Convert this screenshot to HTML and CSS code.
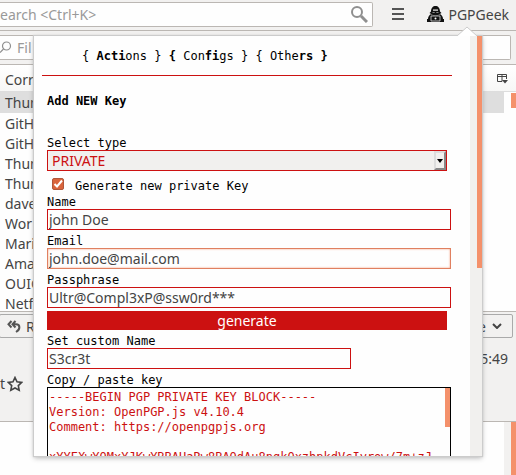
FILE: index.html
```
<!DOCTYPE html>
<html lang="en">

<head>
    <meta charset="UTF-8">
    <meta name="viewport" content="width=device-width, initial-scale=1.0">
    <title>PGPGeek</title>
    <link rel="stylesheet" href="styles.css">
</head>

<body>

    <!-- mail window -->
    <header class="toolbar">
        <div class="search">
            <input type="text" aria-label="Search" placeholder="earch &lt;Ctrl+K&gt;">
            <svg width="18" height="18" viewBox="0 0 18 18" fill="none" stroke="#8f8f8f">
                <circle cx="7" cy="7" r="5" stroke-width="2" />
                <path d="M11 11l6 6" stroke-width="3" />
            </svg>
        </div>
        <button class="menuBtn" aria-label="Menu"><span></span><span></span><span></span></button>
        <button class="geekBtn">
            <svg width="17" height="16" viewBox="0 0 17 16">
                <path d="M4 5.500C4 2 6 0 8.500 0S13 2 13 5.500L14.500 7 12 8.500c-1 1.500-6 1.500-7 0L2.500 7z" fill="#111" />
                <path d="M6 3.500h5v1.200H6z" fill="#f2f1f0" />
                <path d="M5.500 6h2.200v1H5.500zM9.300 6h2.200v1H9.300z" fill="#888" />
                <path d="M4 8c2 2 7 2 9 0 2 1 3 3 3 5h1v3H0v-3h1c0-2 1-4 3-5z" fill="#111" />
                <path d="M4 10h9v5H4z" fill="#111" stroke="#ddd" stroke-width=".8" />
                <circle cx="8.500" cy="12.500" r="1" fill="#fff" />
            </svg>
            PGPGeek
        </button>
    </header>

    <div class="filterBar">
        <svg width="13" height="13" viewBox="0 0 13 13" fill="none" stroke="#8f8f8f" stroke-width="1.200">
            <circle cx="6.500" cy="5" r="4" />
            <path d="M3.500 8L0 11.500" />
        </svg>
        <input type="text" aria-label="Filter" placeholder="Fil">
    </div>

    <div class="listHead">
        <span>Corr</span>
        <svg width="11" height="10" viewBox="0 0 11 10" fill="none" stroke="#444">
            <path d="M5 7.500H.5v-7h9V5M0 2.500h10M5 0v7.500" />
            <path d="M5 6h6L8 9.500z" fill="#444" stroke="none" />
        </svg>
    </div>

    <main class="mailList">
        <ul>
            <li class="selected">Thun</li>
            <li>GitH</li>
            <li>GitH</li>
            <li>Thun</li>
            <li>Thun</li>
            <li>dave</li>
            <li>Wor</li>
            <li>Mari</li>
            <li>Ama</li>
            <li>OUIG</li>
            <li>Netf</li>
        </ul>
        <div class="scroll"><i class="listThumb"></i></div>
    </main>

    <section class="message">
        <div class="actions">
            <button class="reply" aria-label="Reply">
                <svg width="14" height="13" viewBox="0 0 14 13" fill="none" stroke="#555" stroke-width="2">
                    <path d="M4.500 1L1.500 4.300l3 3.200M8.500 1l-3 3.300 3 3.200M6 4.300h3c4.500 0 4.500 5 0 7.700" />
                </svg>
                R
            </button>
            <button class="more">
                More
                <svg width="10" height="6" viewBox="0 0 10 6" fill="none" stroke="#444" stroke-width="2">
                    <path d="M1 1l4 4 4-4" />
                </svg>
            </button>
        </div>
        <time>15:49</time>
        <div class="subject">t<svg width="16" height="16" viewBox="0 0 16 16" fill="none" stroke="#444" stroke-width="1.600">
                <path d="M8 1.500l2 4.300 4.700.6-3.400 3.200.9 4.700L8 12l-4.200 2.300.9-4.700L1.300 6.400 6 5.800z" />
            </svg></div>
    </section>

    <div class="mailBody">
        <div class="scroll"><i class="bodyThumb"></i></div>
    </div>

    <!-- add-on popup -->
    <div class="popup">
        <svg class="arrow" width="20" height="10" viewBox="0 0 20 10">
            <path d="M0 10L10 1l10 9" fill="#fff" stroke="#ccc" />
        </svg>
        <div class="panel">
            <form class="content">
                <nav>{ <b>Acti</b>ons } <b>{</b> Con<b>fi</b>gs } { Othe<b>rs }</b></nav>
                <h1>Add NEW Key</h1>

                <label for="type">Select type</label>
                <div class="selectBox">
                    <select id="type">
                        <option>PRIVATE</option>
                    </select>
                    <span class="drop"></span>
                </div>

                <div class="check">
                    <input type="checkbox" id="newKey" checked>
                    <label for="newKey">Generate new private Key</label>
                </div>

                <label for="name">Name</label>
                <input type="text" id="name" value="john Doe">

                <label for="email">Email</label>
                <input type="text" id="email" class="active" value="john.doe@mail.com">

                <label for="pass">Passphrase</label>
                <input type="text" id="pass" value="Ultr@Compl3xP@ssw0rd***">

                <button type="button" class="generate">generate</button>

                <label for="custom">Set custom Name</label>
                <input type="text" id="custom" class="short" value="S3cr3t">

                <label for="key">Copy / paste key</label>
                <div class="keyBox">
                    <textarea id="key" rows="12">-----BEGIN PGP PRIVATE KEY BLOCK-----
Version: OpenPGP.js v4.10.4
Comment: https://openpgpjs.org

xYYEXwYOMxYJKwYBBAHaRw8BAQdAu8ngkQxzhpkdVcIyrow/7m+zJ</textarea>
                    <i class="keyThumb"></i>
                </div>
            </form>
            <div class="popupScroll"><i></i></div>
        </div>
    </div>

</body>

</html>
```
FILE: styles.css
```
* {
    box-sizing: border-box;
}

body {
    margin: 0;
    height: 100vh;
    overflow: hidden;
    display: flex;
    flex-direction: column;
    background-color: #fefefe;
    color: #444;
    font-family: "Noto Sans", "Open Sans", sans-serif;
    font-size: 14px;
}

svg {
    flex: none;
}

input,
button,
select,
textarea {
    font: inherit;
    color: inherit;
    margin: 0;
    outline: none;
}

input::placeholder {
    color: #999;
    opacity: 1;
}

/* top bar */
.toolbar {
    height: 31px;
    flex: none;
    display: flex;
    align-items: center;
    padding: 0 7px 2px 0;
    background-color: #f2f1f0;
    border-bottom: 1px solid #bbb7b3;
}

.search {
    flex: 1;
    height: 25px;
    display: flex;
    align-items: center;
    padding-right: 4px;
    background-color: #fefefe;
    border: 1px solid #bbb7b3;
    border-left: none;
    border-radius: 0 2px 2px 0;
}

.search input {
    flex: 1;
    min-width: 0;
    padding: 0;
    border: none;
    background: none;
}

.menuBtn {
    width: 12px;
    margin: 0 23px 0 19px;
    padding: 0;
    display: grid;
    gap: 3px;
    border: none;
    background: none;
}

.menuBtn span {
    height: 2px;
    background-color: #555;
}

.geekBtn {
    display: flex;
    align-items: center;
    gap: 4px;
    padding: 0;
    border: none;
    background: none;
}

/* filter line */
.filterBar {
    height: 34px;
    flex: none;
    position: relative;
    padding: 4px 5px 4px 0;
    background-color: #f2f1f0;
    border-bottom: 1px solid #bbb7b3;
}

.filterBar svg {
    position: absolute;
    left: 0;
    top: 10px;
}

.filterBar input {
    width: 100%;
    height: 25px;
    padding: 0 17px;
    background-color: #fefefe;
    border: 1px solid #bbb7b3;
    border-left: none;
    border-radius: 0 2px 2px 0;
}

.listHead {
    height: 27px;
    flex: none;
    display: flex;
    align-items: center;
    justify-content: space-between;
    padding: 2px 8px 0 5px;
    background: linear-gradient(#fff, #f7f7f6);
    border-bottom: 1px solid #ddd;
}

/* mails */
.mailList {
    height: 219px;
    flex: none;
    display: flex;
    overflow: hidden;
}

.mailList ul {
    flex: 1;
    margin: 0;
    padding: 0;
    list-style: none;
}

.mailList li {
    height: 20px;
    padding-left: 5px;
    line-height: 22px;
}

.mailList .selected {
    height: 21px;
    background-color: #dedede;
}

.scroll {
    width: 12px;
    margin-left: auto;
    display: flex;
    justify-content: flex-end;
}

.scroll i {
    width: 5px;
    background-color: #f4916b;
}

.listThumb {
    height: 15px;
    margin-top: 1px;
}

.message {
    height: 111px;
    flex: none;
    padding: 2px 3px;
    background-color: #f2f1f0;
    border-top: 1px solid #bbb7b3;
    border-bottom: 1px solid #bbb7b3;
}

.actions {
    display: flex;
    justify-content: space-between;
    margin-left: -4px;
}

.actions button {
    height: 24px;
    display: flex;
    align-items: center;
    gap: 6px;
    padding: 0 10px;
    background-color: #f2f1f0;
    border: 1px solid #aaa;
    border-radius: 2px;
}

.actions .reply {
    gap: 5px;
    padding: 0 7px;
}

.message time {
    display: block;
    margin: 11px 5px 0 0;
    text-align: right;
}

.subject {
    display: flex;
    align-items: center;
    margin-left: -3px;
    gap: 2px;
    margin-top: 6px;
}

.mailBody {
    flex: 1;
    display: flex;
}

.mailBody .scroll {
    background-color: #f2f1f0;
}

/* popup */
.popup {
    position: absolute;
    left: 34px;
    right: 34px;
    top: 36px;
    bottom: 19px;
    background-color: #fefefe;
    box-shadow: 0 0 1px 1px #ccc, 0 2px 5px rgba(0, 0, 0, 0.3);
}

.arrow {
    position: absolute;
    right: 5px;
    top: -10px;
}

.panel {
    height: 100%;
    display: flex;
    overflow: hidden;
}

.content {
    flex: 1;
    min-width: 0;
    padding: 0 19px 0 13px;
    color: #000;
    font-family: "DejaVu Sans Mono", monospace;
    font-size: 12px;
}

.content nav {
    margin: 0 -1px 0 -5px;
    padding: 11px 0 0 40px;
    height: 40px;
    line-height: 18px;
    white-space: pre;
    border-bottom: 1px solid #cc1111;
}

.content h1 {
    margin: 16px 0 22px;
    font-size: 12px;
    line-height: 18px;
}

.content label {
    display: block;
    padding-top: 4px;
    line-height: 14px;
}

.content input[type="text"] {
    display: block;
    width: 100%;
    height: 21px;
    padding: 0 1px;
    border: 1px solid #cc1111;
    background-color: #fefefe;
    color: #444;
    font-family: "Noto Sans", "Open Sans", sans-serif;
    font-size: 14px;
}

.content input.active {
    border-color: #e08060;
    box-shadow: inset 0 0 2px #f4916b;
}

.content input.short {
    width: 304px;
}

.selectBox {
    position: relative;
    margin-right: 4px;
}

.selectBox select {
    display: block;
    width: 100%;
    height: 21px;
    padding: 0 4px;
    appearance: none;
    border: 1px solid #cc1111;
    border-radius: 0;
    background-color: #f1f0ee;
    color: #cc1111;
    font-family: "Noto Sans", "Open Sans", sans-serif;
    font-size: 14px;
}

.drop {
    position: absolute;
    right: 1px;
    top: 1px;
    bottom: 1px;
    width: 12px;
    display: flex;
    align-items: center;
    justify-content: center;
    border: 2px solid;
    border-color: #ddd #888 #888 #ddd;
    background-color: #f1f0ee;
    pointer-events: none;
}

.drop::after {
    content: "";
    border: 3px solid transparent;
    border-top: 4px solid #000;
    border-bottom: none;
}

.check {
    height: 20px;
    display: flex;
    align-items: flex-end;
    gap: 11px;
    padding-left: 5px;
}

.check input {
    width: 12px;
    height: 12px;
    margin-bottom: 1px;
    appearance: none;
    border: 1px solid #b0563a;
    border-radius: 2px;
}

.check input:checked {
    background: #d9643c url("data:image/svg+xml,%3Csvg xmlns='http://www.w3.org/2000/svg' viewBox='0 0 10 10'%3E%3Cpath d='M1.500 5l2.500 2.500L9 1.500' fill='none' stroke='white' stroke-width='2'/%3E%3C/svg%3E");
}

.content .check label {
    padding: 0;
    line-height: 10px;
}

.generate {
    display: block;
    width: calc(100% - 4px);
    height: 19px;
    margin-top: 3px;
    padding: 0;
    border: none;
    background-color: #cc1111;
    color: #fff;
    font-family: "Noto Sans", "Open Sans", sans-serif;
    font-size: 14px;
    line-height: 19px;
}

.keyBox {
    position: relative;
}

.keyBox textarea {
    display: block;
    width: 100%;
    padding: 2px 1px;
    border: 1px solid #000;
    background-color: #fefefe;
    color: #cc1111;
    line-height: 15px;
    resize: none;
    overflow: hidden;
    white-space: pre;
}

.keyThumb {
    position: absolute;
    right: 1px;
    top: 1px;
    width: 5px;
    height: 39px;
    background-color: #f4916b;
}

.popupScroll {
    width: 12px;
    display: flex;
    justify-content: flex-end;
    background-color: #f1f0ee;
}

.popupScroll i {
    width: 5px;
    height: 232px;
    background-color: #f4916b;
}
```
